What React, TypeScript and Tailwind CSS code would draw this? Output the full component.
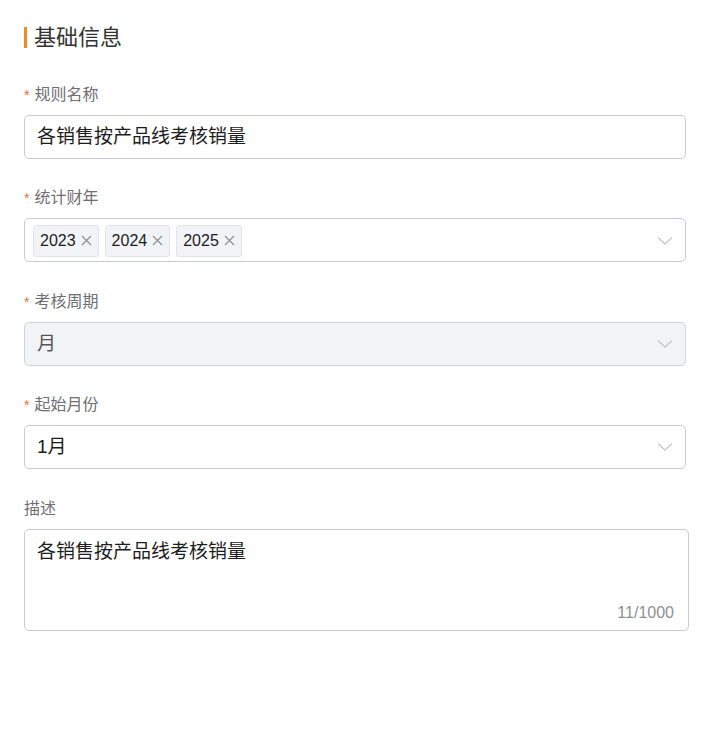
import React from 'react'

const font = { fontFamily: '"Liberation Sans", "Noto Sans CJK SC", sans-serif' }

function Chevron() {
  return (
    <svg width="16" height="10" viewBox="0 0 16 10" fill="none" className="shrink-0">
      <path d="M1.5 2 L8 8 L14.5 2" stroke="#c4c6cf" strokeWidth="1.2" strokeLinecap="round" strokeLinejoin="round" />
    </svg>
  )
}

function Label({ text, required = true }: { text: string; required?: boolean }) {
  return (
    <div className="h-5 flex items-center text-[16px] text-[#6e6e73] mb-[10px]">
      {required && <span className="text-[#f26b3a] mr-[5px] text-[14px] leading-none">*</span>}
      {text}
    </div>
  )
}

function Tag({ year }: { year: string }) {
  return (
    <span className="h-8 pl-[6px] pr-[6px] flex items-center gap-[5px] rounded-[3px] border border-[#e3e4ea] bg-[#f2f3f7] text-[16px] text-[#1d1d1f]">
      {year}
      <svg width="11" height="11" viewBox="0 0 11 11">
        <path d="M1 1 L10 10 M10 1 L1 10" stroke="#8a8c94" strokeWidth="1.1" />
      </svg>
    </span>
  )
}

export default function App() {
  return (
    <div className="min-h-screen bg-white pt-[26px] px-6" style={font}>
      <div className="flex items-center h-[22px] mb-[37px]">
        <span className="w-[3px] h-[21px] bg-[#f0892c] mr-[7px]" />
        <span className="text-[22px] text-[#333333]">基础信息</span>
      </div>

      <div className="w-[662px]">
        <Label text="规则名称" />
        <div className="h-11 rounded-[5px] border border-[#c8cad4] flex items-center px-3 text-[19px] text-[#1d1d1f] mb-[29px]">
          各销售按产品线考核销量
        </div>

        <Label text="统计财年" />
        <div className="h-11 rounded-[5px] border border-[#c8cad4] flex items-center pl-2 pr-3 pt-px mb-[30px]">
          <div className="flex gap-[6px] flex-1">
            <Tag year="2023" />
            <Tag year="2024" />
            <Tag year="2025" />
          </div>
          <Chevron />
        </div>

        <Label text="考核周期" />
        <div className="h-11 rounded-[5px] border border-[#d2d4dc] bg-[#f2f3f5] flex items-center px-3 text-[19px] text-[#55565c] mb-[29px]">
          <span className="flex-1">月</span>
          <Chevron />
        </div>

        <Label text="起始月份" />
        <div className="h-11 rounded-[5px] border border-[#c8cad4] flex items-center px-3 text-[19px] text-[#1d1d1f] mb-[30px]">
          <span className="flex-1">1月</span>
          <Chevron />
        </div>

        <Label text="描述" required={false} />
      </div>
      <div className="w-[665px] h-[102px] rounded-[5px] border border-[#c8cad4] px-3 pt-[8px] pb-[5px] flex flex-col">
        <div className="flex-1 text-[19px] text-[#1d1d1f]">各销售按产品线考核销量</div>
        <div className="text-right text-[16px] text-[#8e8f95] pr-[2px]">11/1000</div>
      </div>
    </div>
  )
}
